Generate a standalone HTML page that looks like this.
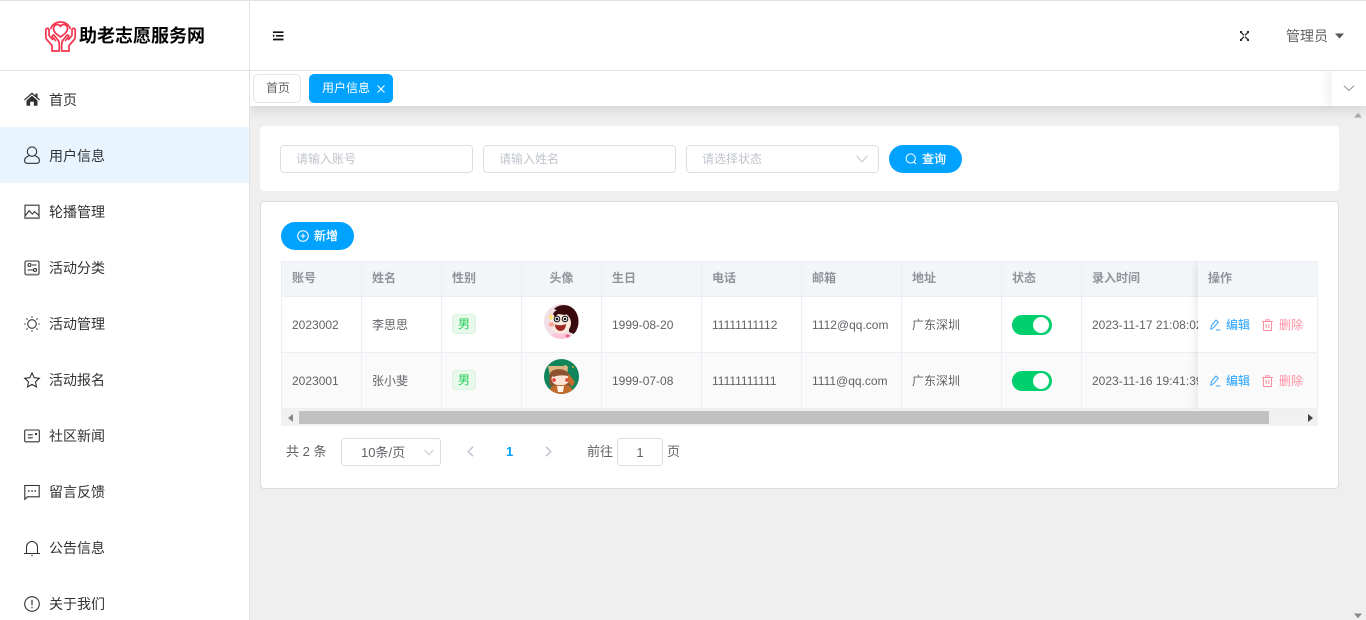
<!DOCTYPE html>
<html lang="zh-CN"><head><meta charset="utf-8"><title>助老志愿服务网</title>
<style>
*{box-sizing:border-box}
html,body{margin:0;padding:0;width:1366px;height:620px;overflow:hidden;background:#efefef}
body{position:relative;font-family:"Liberation Sans","Noto Sans CJK SC",sans-serif;font-size:13px;color:#606266}
.a{position:absolute}
.t{position:absolute;white-space:nowrap;line-height:20px}
svg{position:absolute;overflow:visible}
.mi{position:absolute;left:0;width:249px;height:56px}
.mi svg{left:24px;top:21px;width:16px;height:16px;fill:none;stroke:#303133;stroke-width:1.1}
.mi span{position:absolute;left:49px;top:19px;line-height:20px;font-size:14px;color:#303133;white-space:nowrap}
.inp{position:absolute;top:145px;height:28px;width:193px;border:1px solid #dcdfe6;border-radius:4px;background:#fff;color:#c0c4cc;padding-left:15px;line-height:26px;font-size:12px}
.btn{position:absolute;height:28px;border-radius:14px;background:#00a2ff;color:#fff;font-size:12px;line-height:28px;-webkit-text-stroke:.25px #fff}
.cell{position:absolute;border-right:1px solid #ebeef5;border-bottom:1px solid #ebeef5;line-height:20px;padding-left:11px;white-space:nowrap;overflow:hidden;font-size:12px;color:#606266}
.h{top:261px;height:36px;background:#f3f6f9;color:#909399;font-weight:bold;font-size:12px;padding-top:6px;border-top:1px solid #ebeef5}
.r1{top:297px;height:56px;background:#fff;padding-top:17px}
.r2{top:353px;height:56px;background:#fafafa;padding-top:17px}
.d{padding-top:18px}
.tag{display:inline-block;width:24px;height:20px;line-height:18px;background:#e8f8ea;border:1px solid #d9f4dd;border-radius:4px;color:#22cc58;text-align:center;font-size:12px}
.sw{position:absolute;left:1012px;width:40px;height:20px;border-radius:10px;background:#00cf6d}
.sw i{position:absolute;left:21px;top:2px;width:16px;height:16px;border-radius:50%;background:#fff}
.act{position:absolute;font-size:12px;line-height:20px;white-space:nowrap}
</style></head><body>

<!-- tabs (below header in paint order) -->
<div class="a" style="left:250px;top:71px;width:1116px;height:35px;background:#fff;box-shadow:0 3px 12px rgba(0,0,0,.14);clip-path:inset(0 0 -24px 0)"></div>

<!-- top strip / header -->
<div class="a" style="left:0;top:0;width:1366px;height:71px;background:#fff;border-top:1px solid #e2e2e2;border-bottom:1px solid #e2e2e2"></div>
<div class="a" style="left:0;top:71px;width:249px;height:549px;background:#fff"></div>
<div class="a" style="left:249px;top:0;width:1px;height:620px;background:#e2e2e2"></div>

<!-- logo -->
<svg style="left:45px;top:21px" width="31" height="31" viewBox="0 0 31 31" fill="none" stroke="#f5344f" stroke-width="1.7" stroke-linejoin="round" stroke-linecap="round">
<path d="M15.500 16C11 13 8.500 10.800 8.500 7.500 8.500 5.200 10.300 3.500 12.200 3.500c1.400 0 2.600.7 3.300 2 .7-1.300 1.900-2 3.300-2 1.900 0 3.700 1.700 3.700 4 0 3.300-2.500 5.500-7 8.500z"/>
<path d="M5.800 7.500A10 10 0 0 1 15.500 1a10 10 0 0 1 9.700 6.500"/>
<g id="hand"><path d="M7 30V24.500L1.700 18.500C1 17.600.8 16.800.8 15.500V9c0-1 .7-1.700 1.600-1.700S4 8 4 9v5.500l3.500 4"/><path d="M7 30h7.300v-6.500c0-2-.5-3.500-1.500-4.700L9.300 14.500C8.300 13.500 6.800 14.500 7.500 16l3 3.500"/></g>
<g transform="matrix(-1 0 0 1 31 0)"><path d="M7 30V24.500L1.700 18.500C1 17.600.8 16.800.8 15.500V9c0-1 .7-1.700 1.600-1.700S4 8 4 9v5.500l3.500 4"/><path d="M7 30h7.300v-6.500c0-2-.5-3.500-1.500-4.700L9.300 14.500C8.300 13.500 6.800 14.500 7.500 16l3 3.500"/></g>
</svg>
<div class="t" style="left:79px;top:24px;font-size:18px;line-height:24px;font-weight:bold;color:#000">助老志愿服务网</div>

<!-- header icons -->
<svg style="left:273px;top:31px" width="11" height="10" viewBox="0 0 11 10"><path d="M0 1.200h10.500M3 4.800h7.500M0 8.500h10.500" stroke="#111" stroke-width="1.700"/><path d="M0 3.200L1.800 4.800 0 6.400z" fill="#111"/></svg>
<svg style="left:1240px;top:31px" width="9" height="10" viewBox="0 0 9 10" stroke="#222" stroke-width="1.300" fill="none"><path d="M1 1.200L3.900 4.300M8 1.200L5.100 4.300M1 8.800L3.900 5.700M8 8.800L5.100 5.700"/><path d="M0 0h2.500L0 2.500zM9 0H6.500L9 2.500zM0 10h2.500L0 7.500zM9 10H6.500L9 7.500z" fill="#222" stroke="none"/></svg>
<div class="t" style="left:1286px;top:26px;font-size:14px;color:#606266">管理员</div>
<svg style="left:1335px;top:33px" width="9" height="6" viewBox="0 0 9 6"><path d="M0 .5h9L4.500 5.500z" fill="#555"/></svg>

<!-- tabs content -->
<div class="a" style="left:253px;top:74px;width:48px;height:29px;border:1px solid #e6e6e6;border-radius:5px;background:#fff;color:#606266;font-size:12px;line-height:27px;padding-left:12px">首页</div>
<div class="a" style="left:309px;top:74px;width:84px;height:29px;border-radius:5px;background:#00a2ff;color:#fff;font-size:12px;line-height:29px;padding-left:13px">用户信息</div>
<svg style="left:377px;top:85px" width="8" height="8" viewBox="0 0 8 8"><path d="M.5.500l7 7M7.500.500l-7 7" stroke="#fff" stroke-width="1"/></svg>
<div class="a" style="left:1332px;top:71px;width:34px;height:35px;background:#fff;box-shadow:-6px 0 8px rgba(0,0,0,.05);clip-path:inset(0 0 0 -14px)"></div>
<svg style="left:1343px;top:85px" width="12" height="6" viewBox="0 0 12 6"><path d="M.8.600L6 5.400 11.200.600" fill="none" stroke="#909399" stroke-width="1"/></svg>

<!-- page scrollbar arrows -->
<svg style="left:1353px;top:112px" width="10" height="6" viewBox="0 0 10 6"><path d="M1 5.500L5 .8 9 5.500z" fill="#aaa"/></svg>
<svg style="left:1353px;top:613px" width="10" height="6" viewBox="0 0 10 6"><path d="M1 .5L5 5.200 9 .5z" fill="#888"/></svg>

<!-- menu -->
<div class="a" style="left:0;top:127px;width:249px;height:56px;background:#e8f5ff"></div>
<div class="mi" style="top:71px"><svg style="top:20px" viewBox="0 0 16 16"><path d="M8 1.500L0 8.500l.8.900L8 3.300l7.200 6.100.8-.9-2.500-2.200V2.500h-2v2z" fill="#303133" stroke="none"/><path d="M2.500 9.500L8 4.600l5.500 4.900v5.300H9.800v-4H6.200v4H2.500z" fill="#303133" stroke="none"/></svg><span>首页</span></div>
<div class="mi" style="top:127px"><svg style="top:19px;height:18px" viewBox="0 0 16 18"><circle cx="8" cy="5.600" r="4.700"/><path d="M5.500 9.600C3 10.200.6 12 .6 14.500c0 1.700 1 2.800 2.600 2.800h9.600c1.600 0 2.600-1.100 2.600-2.800 0-2.500-2.400-4.300-4.900-4.900"/></svg><span>用户信息</span></div>
<div class="mi" style="top:183px"><svg viewBox="0 0 16 16"><rect x="1" y="1.200" width="14" height="13.300"/><path d="M1.500 11.500l3.600-4.800 3.300 3.300 2.300-2.400 4 3.800"/><path d="M1 14h14" stroke-width="1.800" stroke="#888"/></svg><span>轮播管理</span></div>
<div class="mi" style="top:239px"><svg viewBox="0 0 16 16"><rect x="1" y="1" width="14" height="13.800" rx="1.500"/><circle cx="5.500" cy="5" r="1.500"/><path d="M8 5h4.500M3.500 10h5.500"/><circle cx="11" cy="10" r="1.500"/><path d="M1.500 14.300h13" stroke="#888" stroke-width="1.200"/></svg><span>活动分类</span></div>
<div class="mi" style="top:295px"><svg viewBox="0 0 16 16"><circle cx="8" cy="8" r="4.300"/><path d="M8 0v2M8 14v2M0 8h2M14 8h2M2.300 2.300l1.400 1.400M12.300 12.300l1.400 1.400M2.300 13.700l1.400-1.400M12.300 3.700l1.400-1.400" stroke="#666"/></svg><span>活动管理</span></div>
<div class="mi" style="top:351px"><svg viewBox="0 0 16 16"><path d="M8 .9l2.200 4.800 5.100.6-3.800 3.500 1 5.100L8 12.400l-4.500 2.500 1-5.100L.7 6.300l5.100-.6z"/></svg><span>活动报名</span></div>
<div class="mi" style="top:407px"><svg viewBox="0 0 16 16"><rect x=".7" y="2" width="14.600" height="11.800" rx="1"/><path d="M3.800 6.800h5M3.800 9.800h5"/><path d="M11 6h2" stroke-width="2"/></svg><span>社区新闻</span></div>
<div class="mi" style="top:463px"><svg viewBox="0 0 16 16"><path d="M.8 15.300V1.500h14.400v11.300H3.400z"/><path d="M4 7h1.500M7.300 7h1.500M10.500 7H12" stroke-width="1.500"/></svg><span>留言反馈</span></div>
<div class="mi" style="top:519px"><svg viewBox="0 0 16 16"><path d="M0 13.500h16M2.500 13.500V7a5.500 5.500 0 0 1 11 0v6.500"/><path d="M8 15v1" stroke-width="1.400"/></svg><span>公告信息</span></div>
<div class="mi" style="top:575px"><svg viewBox="0 0 16 16"><circle cx="8" cy="8" r="7.300"/><path d="M8 3.800v5.400" stroke-width="1.200"/><path d="M8 10.900v1.400" stroke-width="1.200"/></svg><span>关于我们</span></div>

<!-- search card -->
<div class="a" style="left:260px;top:126px;width:1079px;height:65px;background:#fff;border-radius:4px"></div>
<div class="inp" style="left:280px">请输入账号</div>
<div class="inp" style="left:483px">请输入姓名</div>
<div class="inp" style="left:686px">请选择状态</div>
<svg style="left:856px;top:155px" width="12" height="8" viewBox="0 0 12 8"><path d="M.6.800L6 6.800 11.400.800" fill="none" stroke="#c0c4cc" stroke-width="1"/></svg>
<div class="btn" style="left:889px;top:145px;width:73px;padding-left:33px">查询</div>
<svg style="left:905px;top:153px" width="12" height="12" viewBox="0 0 12 12" fill="none" stroke="#fff" stroke-width="1"><circle cx="5.700" cy="5.500" r="4.600"/><path d="M9 9l2 2"/></svg>

<!-- table card -->
<div class="a" style="left:260px;top:201px;width:1079px;height:288px;background:#fff;border:1px solid #ddd;border-radius:4px"></div>
<div class="btn" style="left:281px;top:222px;width:73px;padding-left:33px">新增</div>
<svg style="left:297px;top:230px" width="12" height="12" viewBox="0 0 12 12" fill="none" stroke="#fff" stroke-width="1"><circle cx="6" cy="6" r="5.300"/><path d="M3.500 6h5M6 3.500v5"/></svg>

<!-- table -->
<div class="cell h" style="left:281px;width:81px;border-left:1px solid #ebeef5;padding-left:10px">账号</div>
<div class="cell h" style="left:362px;width:80px;padding-left:10px">姓名</div>
<div class="cell h" style="left:442px;width:80px;padding-left:10px">性别</div>
<div class="cell h" style="left:522px;width:80px;padding-left:0;text-align:center">头像</div>
<div class="cell h" style="left:602px;width:100px;padding-left:10px">生日</div>
<div class="cell h" style="left:702px;width:100px;padding-left:10px">电话</div>
<div class="cell h" style="left:802px;width:100px;padding-left:10px">邮箱</div>
<div class="cell h" style="left:902px;width:100px;padding-left:10px">地址</div>
<div class="cell h" style="left:1002px;width:80px;padding-left:10px">状态</div>
<div class="cell h" style="left:1082px;width:120px;padding-left:10px">录入时间</div>

<div class="cell r1 d" style="left:281px;width:81px;border-left:1px solid #ebeef5;padding-left:10px">2023002</div>
<div class="cell r1 d" style="left:362px;width:80px;padding-left:10px">李思思</div>
<div class="cell r1" style="left:442px;width:80px;padding-left:10px"><span class="tag">男</span></div>
<div class="cell r1" style="left:522px;width:80px"></div>
<div class="cell r1 d" style="left:602px;width:100px;padding-left:10px">1999-08-20</div>
<div class="cell r1 d" style="left:702px;width:100px;padding-left:10px">11111111112</div>
<div class="cell r1 d" style="left:802px;width:100px;padding-left:10px">1112@qq.com</div>
<div class="cell r1 d" style="left:902px;width:100px;padding-left:10px">广东深圳</div>
<div class="cell r1" style="left:1002px;width:80px"></div>
<div class="cell r1 d" style="left:1082px;width:120px;padding-left:10px">2023-11-17 21:08:02</div>

<div class="cell r2 d" style="left:281px;width:81px;border-left:1px solid #ebeef5;padding-left:10px">2023001</div>
<div class="cell r2 d" style="left:362px;width:80px;padding-left:10px">张小斐</div>
<div class="cell r2" style="left:442px;width:80px;padding-left:10px"><span class="tag">男</span></div>
<div class="cell r2" style="left:522px;width:80px"></div>
<div class="cell r2 d" style="left:602px;width:100px;padding-left:10px">1999-07-08</div>
<div class="cell r2 d" style="left:702px;width:100px;padding-left:10px">11111111111</div>
<div class="cell r2 d" style="left:802px;width:100px;padding-left:10px">1111@qq.com</div>
<div class="cell r2 d" style="left:902px;width:100px;padding-left:10px">广东深圳</div>
<div class="cell r2" style="left:1002px;width:80px"></div>
<div class="cell r2 d" style="left:1082px;width:120px;padding-left:10px">2023-11-16 19:41:39</div>

<div class="sw" style="top:315px"><i></i></div>
<div class="sw" style="top:371px"><i></i></div>

<!-- avatars -->
<svg style="left:544px;top:304px" width="35" height="35" viewBox="0 0 35 35">
<defs><clipPath id="c1"><circle cx="17.500" cy="17.500" r="17.500"/></clipPath><clipPath id="c2"><circle cx="17.500" cy="17.500" r="17.500"/></clipPath></defs>
<g clip-path="url(#c1)"><rect width="35" height="35" fill="#f1dfe6"/>
<path d="M10 5c6-6 18-5 22 3 4 7 3 16-2 22l-5-2 0-14-8-6z" fill="#3a0b0e"/>
<path d="M6 32c4-4 18-4 22 0v4H6z" fill="#fcc6d6"/>
<ellipse cx="16.500" cy="19" rx="10.500" ry="10.500" fill="#fdeadf"/>
<path d="M9 10c3-6 12-7 17-2l-5 3-7-1-3 3z" fill="#3a0b0e"/>
<circle cx="13" cy="15" r="2.800" fill="#fff" stroke="#111" stroke-width="1"/><circle cx="21" cy="15" r="2.800" fill="#fff" stroke="#111" stroke-width="1"/>
<circle cx="13" cy="15" r="1.300" fill="#111"/><circle cx="21" cy="15" r="1.300" fill="#111"/>
<ellipse cx="7.500" cy="20.500" rx="3" ry="2.200" fill="#f9a79d"/>
<path d="M11 20.500c3 1 8 1 11-.5 0 4.500-2.500 7-5.500 7s-5.500-2.500-5.500-6.500z" fill="#9c2b25"/>
<path d="M7 9l1 3 2.500 1-2.500 1L7 17l-1-3-2.500-1 2.500-1z" fill="#ffe26a"/>
<path d="M21 32l3-2 2 2-2 2z" fill="#e85c80"/></g></svg>
<svg style="left:544px;top:359px" width="35" height="35" viewBox="0 0 35 35">
<g clip-path="url(#c2)"><rect width="35" height="35" fill="#10855a"/>
<path d="M4 7h15l3-1 2 2-1 9H6z" fill="#dcb680"/>
<path d="M6 15c1-6 15-7 19 0 2 4 2 9 1 12H6c-1-4-1-8 0-12z" fill="#8d5330"/>
<ellipse cx="16.500" cy="20" rx="9" ry="6.500" fill="#fbe3d6"/>
<path d="M8 16c3-4 13-4 17 0l-1 1c-5-1-10-1-15 1z" fill="#8d5330"/>
<circle cx="10" cy="21" r="1.800" fill="#ec3a36"/><circle cx="23" cy="21" r="1.800" fill="#ec3a36"/>
<path d="M4 35c1-6 5-9 9-9h8c4 0 8 3 9 9z" fill="#c46a2c"/>
<path d="M13 27h7l-1 6h-5z" fill="#fff3e6"/>
<path d="M25 15l6 8-3 5-5-7z" fill="#c46a2c"/>
<circle cx="29" cy="8" r="1" fill="#d8a63c"/></g></svg>

<!-- fixed op col -->
<div class="a" style="left:1198px;top:261px;width:120px;height:148px;box-shadow:-2px 2px 8px rgba(0,0,0,.09);clip-path:inset(0 0 -10px -10px)"></div>
<div class="cell h" style="left:1198px;width:120px;padding-left:10px">操作</div>
<div class="cell r1" style="left:1198px;width:120px"></div>
<div class="cell r2" style="left:1198px;width:120px"></div>
<div class="act" style="left:1226px;top:315px;color:#1e9fff">编辑</div>
<div class="act" style="left:1279px;top:315px;color:#ff8fa3">删除</div>
<div class="act" style="left:1226px;top:371px;color:#1e9fff">编辑</div>
<div class="act" style="left:1279px;top:371px;color:#ff8fa3">删除</div>
<svg style="left:1210px;top:319px" width="11" height="12" viewBox="0 0 11 12" fill="none" stroke="#3aa6ff" stroke-width="1"><path d="M.8 10.300L1.500 6.500 6 1l2.300 2-4.500 5.500zM6 11h4.500"/></svg>
<svg style="left:1210px;top:375px" width="11" height="12" viewBox="0 0 11 12" fill="none" stroke="#3aa6ff" stroke-width="1"><path d="M.8 10.300L1.500 6.500 6 1l2.300 2-4.500 5.500zM6 11h4.500"/></svg>
<svg style="left:1262px;top:319px" width="11" height="12" viewBox="0 0 11 12" fill="none" stroke="#ff8fa3" stroke-width="1"><path d="M0 2.500h11M3.800 2.500V.8h3.400v1.700M1.500 2.500v9h8v-9M4.200 5v4M6.800 5v4"/></svg>
<svg style="left:1262px;top:375px" width="11" height="12" viewBox="0 0 11 12" fill="none" stroke="#ff8fa3" stroke-width="1"><path d="M0 2.500h11M3.800 2.500V.8h3.400v1.700M1.500 2.500v9h8v-9M4.200 5v4M6.800 5v4"/></svg>

<!-- h scrollbar -->
<div class="a" style="left:281px;top:409px;width:1037px;height:17px;background:#f1f1f1"></div>
<div class="a" style="left:299px;top:411px;width:970px;height:13px;background:#c1c1c1"></div>
<svg style="left:288px;top:414px" width="5" height="8" viewBox="0 0 5 8"><path d="M5 0v8L0 4z" fill="#888"/></svg>
<svg style="left:1308px;top:414px" width="5" height="8" viewBox="0 0 5 8"><path d="M0 0v8l5-4z" fill="#444"/></svg>

<!-- pagination -->
<div class="t" style="left:286px;top:442px;color:#606266">共 2 条</div>
<div class="a" style="left:341px;top:438px;width:100px;height:28px;border:1px solid #dcdfe6;border-radius:3px;background:#fff;line-height:27px;padding-left:19px;color:#606266">10条/页</div>
<svg style="left:424px;top:449px" width="10" height="7" viewBox="0 0 10 7"><path d="M.6.800L5 5.800 9.400.800" fill="none" stroke="#c0c4cc" stroke-width="1"/></svg>
<svg style="left:467px;top:446px" width="7" height="11" viewBox="0 0 7 11"><path d="M6 .8L1.200 5.500 6 10.200" fill="none" stroke="#c0c4cc" stroke-width="1.500"/></svg>
<div class="t" style="left:506px;top:442px;color:#00a2ff;font-weight:bold">1</div>
<svg style="left:545px;top:446px" width="7" height="11" viewBox="0 0 7 11"><path d="M1 .8l4.800 4.700L1 10.200" fill="none" stroke="#c0c4cc" stroke-width="1.500"/></svg>
<div class="t" style="left:587px;top:442px;color:#606266">前往</div>
<div class="a" style="left:617px;top:438px;width:46px;height:28px;border:1px solid #dcdfe6;border-radius:3px;background:#fff;line-height:27px;text-align:center;color:#606266">1</div>
<div class="t" style="left:667px;top:442px;color:#606266">页</div>
</body></html>
